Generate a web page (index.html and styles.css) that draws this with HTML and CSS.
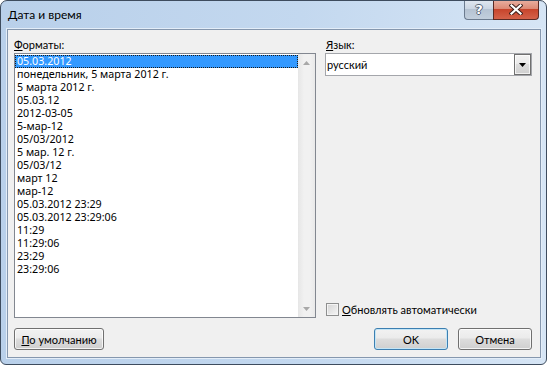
FILE: index.html
```html
<!DOCTYPE html>
<html lang="ru">
<head>
    <meta charset="UTF-8">
    <meta name="viewport" content="width=device-width, initial-scale=1.0">
    <link rel="stylesheet" href="styles.css">
    <title>Дата и время</title>
</head>
<body>
    <div class="window">
        <div class="titlebar">
            <span class="title">Дата и время</span>
            <div class="caption-btns">
                <span class="cap help">?</span>
                <span class="cap close">
                    <svg width="14" height="11" viewBox="0 0 14 11">
                        <path d="M2.5 1.5 L11.5 9.5 M11.5 1.5 L2.5 9.5" stroke="#40201c" stroke-width="4.2" stroke-linecap="square"/>
                        <path d="M2.5 1.5 L11.5 9.5 M11.5 1.5 L2.5 9.5" stroke="#ffffff" stroke-width="2.2" stroke-linecap="square"/>
                    </svg>
                </span>
            </div>
        </div>

        <div class="client">
            <div class="main">
                <div class="col-left">
                    <div class="lbl"><u>Ф</u>орматы:</div>
                    <div class="listbox">
                        <ul class="items">
                            <li class="selected">05.03.2012</li>
                            <li>понедельник, 5 марта 2012 г.</li>
                            <li>5 марта 2012 г.</li>
                            <li>05.03.12</li>
                            <li>2012-03-05</li>
                            <li>5-мар-12</li>
                            <li>05/03/2012</li>
                            <li>5 мар. 12 г.</li>
                            <li>05/03/12</li>
                            <li>март 12</li>
                            <li>мар-12</li>
                            <li>05.03.2012 23:29</li>
                            <li>05.03.2012 23:29:06</li>
                            <li>11:29</li>
                            <li>11:29:06</li>
                            <li>23:29</li>
                            <li>23:29:06</li>
                        </ul>
                        <div class="scrollbar">
                            <span class="sb-btn">
                                <svg width="7" height="4" viewBox="0 0 7 4"><polygon points="0,4 7,4 3.5,0" fill="#a8a8a8"/></svg>
                            </span>
                            <span class="sb-track"></span>
                            <span class="sb-btn">
                                <svg width="7" height="4" viewBox="0 0 7 4"><polygon points="0,0 7,0 3.5,4" fill="#a8a8a8"/></svg>
                            </span>
                        </div>
                    </div>
                </div>

                <div class="col-right">
                    <div class="lbl"><u>Я</u>зык:</div>
                    <div class="combo">
                        <span class="combo-val">русский</span>
                        <span class="drop">
                            <svg width="7" height="4" viewBox="0 0 7 4"><polygon points="0,0 7,0 3.5,4" fill="#000"/></svg>
                        </span>
                    </div>
                    <label class="check">
                        <span class="box"></span>
                        <span><u>О</u>бновлять автоматически</span>
                    </label>
                </div>
            </div>

            <div class="buttons">
                <button class="btn btn-wide"><u>П</u>о умолчанию</button>
                <button class="btn btn-default">OK</button>
                <button class="btn">Отмена</button>
            </div>
        </div>
    </div>
</body>
</html>
```

FILE: styles.css
```css
/* Page */
body {
    margin: 0;
    background: #ffffff;
    font-family: Lato, "Noto Sans", sans-serif;
    font-size: 11px;
    color: #000000;
}

/* Window frame */
.window {
    width: 547px;
    height: 365px;
    box-sizing: border-box;
    border: 1px solid #3e4c5e;
    border-radius: 7px 7px 6px 6px;
    background: linear-gradient(to right, #b9d0ea 0%, #c3d8ef 55%, #d6e5f5 100%);
    display: flex;
    flex-direction: column;
    overflow: hidden;
}

.titlebar {
    height: 28px;
    flex: none;
    display: flex;
    align-items: center;
    padding-left: 7px;
}

.title {
    font-size: 12px;
    line-height: 16px;
    padding-bottom: 1px;
}

.caption-btns {
    margin-left: auto;
    margin-right: 7px;
    align-self: flex-start;
    margin-top: -1px;
    display: flex;
}

.cap {
    height: 20px;
    box-sizing: border-box;
    display: flex;
    align-items: center;
    justify-content: center;
}

.help {
    width: 29px;
    border: 1px solid #6b7b8f;
    border-top: none;
    border-right: none;
    border-radius: 0 0 0 4px;
    background: linear-gradient(#e1e8f1 0%, #cbd6e3 45%, #b5c3d3 50%, #c2cfdd 100%);
    color: #ffffff;
    font-family: "DejaVu Sans", sans-serif;
    font-weight: bold;
    font-size: 13px;
    text-shadow: 1px 0 #556477, -1px 0 #556477, 0 1px #556477, 0 -1px #556477;
}

.close {
    width: 46px;
    border: 1px solid #5a2a24;
    border-top: none;
    border-radius: 0 0 4px 0;
    background: linear-gradient(#eab1a2 0%, #dc8a76 45%, #c7452c 50%, #d4624a 100%);
}

/* Client area */
.client {
    flex: 1;
    margin: 0 5px 6px 6px;
    border: 1px solid #8597ae;
    box-shadow: 0 0 0 1px #e3edf8;
    background: #f0f0f0;
    padding: 7px 8px 7px 6px;
    display: flex;
    flex-direction: column;
    gap: 10px;
}

.main {
    flex: 1;
    display: flex;
    gap: 9px;
}

.lbl {
    height: 16px;
    line-height: 16px;
}

.col-left {
    width: 302px;
    display: flex;
    flex-direction: column;
}

.listbox {
    flex: 1;
    border: 1px solid #828790;
    background: #ffffff;
    display: flex;
}

.items {
    flex: 1;
    list-style: none;
    margin: 0;
    padding: 1px 0 0 0;
    font-family: "Noto Sans", sans-serif;
    font-size: 10.7px;
}

.items li {
    height: 13px;
    line-height: 13px;
    padding-left: 2px;
    white-space: nowrap;
}

.items li.selected {
    background: #3399ff;
    color: #ffffff;
    outline: 1px dotted #1a1a1a;
    outline-offset: -1px;
}

/* Disabled scrollbar */
.scrollbar {
    width: 17px;
    display: flex;
    flex-direction: column;
    background: linear-gradient(to right, #e6e6e6 0%, #f1f1f1 35%, #f1f1f1 70%, #e9e9e9 100%);
}

.sb-btn {
    height: 17px;
    display: flex;
    align-items: center;
    justify-content: center;
}

.sb-track {
    flex: 1;
}

.col-right {
    width: 207px;
    display: flex;
    flex-direction: column;
}

.col-right .lbl {
    padding-left: 1px;
}

.combo {
    height: 23px;
    box-sizing: border-box;
    border: 1px solid #a4a6ab;
    background: #ffffff;
    display: flex;
    align-items: center;
}

.combo-val {
    flex: 1;
    padding-left: 1px;
}

.drop {
    width: 17px;
    height: 21px;
    box-sizing: border-box;
    border: 1px solid #707070;
    background: linear-gradient(#f2f2f2 0%, #ebebeb 45%, #dddddd 50%, #cfcfcf 100%);
    box-shadow: inset 0 0 0 1px rgba(255, 255, 255, 0.7);
    display: flex;
    align-items: center;
    justify-content: center;
}

.check {
    margin-top: auto;
    margin-bottom: 1px;
    height: 16px;
    padding-left: 1px;
    display: flex;
    align-items: center;
    gap: 3px;
}

.box {
    width: 13px;
    height: 13px;
    box-sizing: border-box;
    border: 1px solid #8e8f8f;
    background: linear-gradient(135deg, #d4d4d4 0%, #f6f6f6 100%);
    box-shadow: inset 0 0 0 1px #f4f4f4;
}

/* Bottom buttons */
.buttons {
    height: 22px;
    flex: none;
    display: flex;
    gap: 10px;
}

.btn {
    width: 74px;
    height: 22px;
    padding: 0;
    font-family: inherit;
    font-size: 11px;
    color: #000000;
    border: 1px solid #707070;
    border-radius: 3px;
    background: linear-gradient(#f2f2f2 0%, #ebebeb 45%, #dddddd 50%, #cfcfcf 100%);
    box-shadow: inset 0 0 0 1px rgba(255, 255, 255, 0.75);
}

.btn-wide {
    width: 90px;
}

.btn-default {
    margin-left: auto;
    border-color: #3c7fb1;
    box-shadow: inset 0 0 0 1px #c4e5f6;
}
```
